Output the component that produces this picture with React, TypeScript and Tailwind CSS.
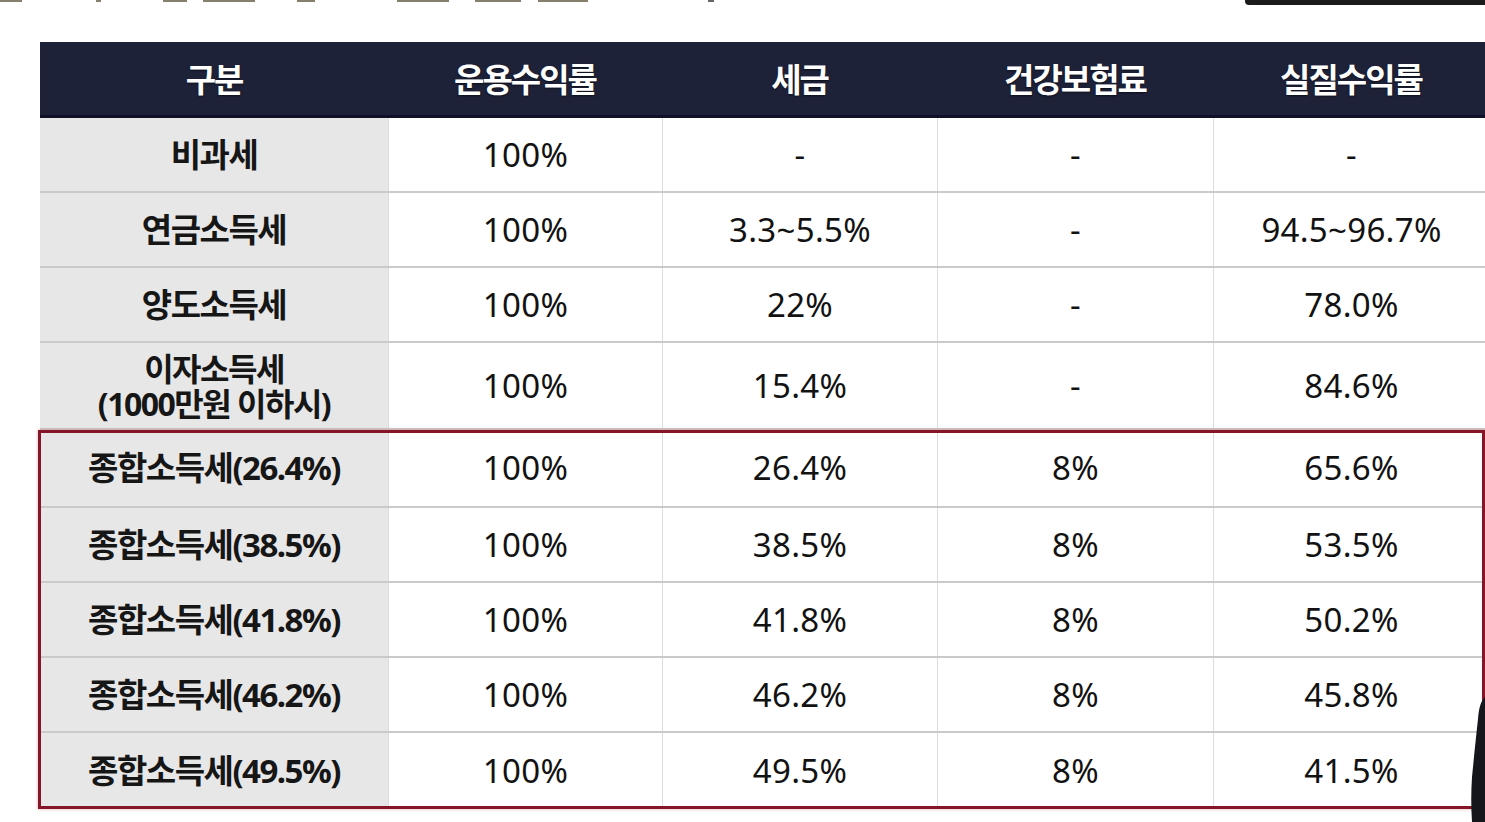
import React from "react";

type Row = { label: React.ReactNode; h: string; cells: string[] };

const headers = ["구분", "운용수익률", "세금", "건강보험료", "실질수익률"];

const plainRows: Row[] = [
  { label: "비과세", h: "h-[75px]", cells: ["100%", "-", "-", "-"] },
  { label: "연금소득세", h: "h-[75px]", cells: ["100%", "3.3~5.5%", "-", "94.5~96.7%"] },
  { label: "양도소득세", h: "h-[75px]", cells: ["100%", "22%", "-", "78.0%"] },
  {
    label: (
      <div className="flex flex-col items-center text-[32px] leading-[35px]">
        <span>이자소득세</span>
        <span>(1000만원 이하시)</span>
      </div>
    ),
    h: "h-[87px]",
    cells: ["100%", "15.4%", "-", "84.6%"],
  },
];

const comprehensiveRows: Row[] = [
  { label: "종합소득세(26.4%)", h: "h-[78px]", cells: ["100%", "26.4%", "8%", "65.6%"] },
  { label: "종합소득세(38.5%)", h: "h-[75px]", cells: ["100%", "38.5%", "8%", "53.5%"] },
  { label: "종합소득세(41.8%)", h: "h-[75px]", cells: ["100%", "41.8%", "8%", "50.2%"] },
  { label: "종합소득세(46.2%)", h: "h-[75px]", cells: ["100%", "46.2%", "8%", "45.8%"] },
  { label: "종합소득세(49.5%)", h: "h-[76px]", cells: ["100%", "49.5%", "8%", "41.5%"] },
];

const cols = "grid grid-cols-[348px_274px_275px_276px_276px]";

function TableRow({ row, last }: { row: Row; last?: boolean }) {
  return (
    <div className={`${cols} ${row.h} ${last ? "" : "border-b-2 border-[#cacaca]"}`}>
      <div className="flex items-center justify-center bg-[#e7e7e7] text-center text-[33px] font-bold tracking-[-1.5px] text-[#161616]">
        {row.label}
      </div>
      {row.cells.map((c, i) => (
        <div
          key={i}
          className="flex items-center justify-center border-l border-[#dcdcdc] text-[33px] tracking-[0.3px] text-[#121212]"
        >
          {c}
        </div>
      ))}
    </div>
  );
}

export default function App() {
  return (
    <div className="relative h-[822px] w-[1485px] overflow-hidden bg-white font-['Noto_Sans','Noto_Sans_CJK_KR',sans-serif]">
      {/* cut-off title fragments above the table */}
      <div className="absolute left-0 top-0 flex h-[2px] w-full">
        <div className="h-[2px] w-[22px] bg-[#857f6c]" />
        <div className="ml-[74px] h-[2px] w-[5px] bg-[#857f6c]" />
        <div className="ml-[62px] h-[2px] w-[24px] bg-[#857f6c]" />
        <div className="ml-[16px] h-[2px] w-[52px] bg-[#857f6c]" />
        <div className="ml-[42px] h-[2px] w-[18px] bg-[#857f6c]" />
        <div className="ml-[82px] h-[2px] w-[52px] bg-[#857f6c]" />
        <div className="ml-[26px] h-[2px] w-[46px] bg-[#857f6c]" />
        <div className="ml-[17px] h-[2px] w-[50px] bg-[#857f6c]" />
        <div className="ml-[120px] h-[2px] w-[6px] bg-[#666]" />
      </div>
      <div className="absolute right-0 top-0 h-[5px] w-[240px] rounded-bl-[4px] bg-[#1b1b1b]" />

      <div className="ml-[40px] mt-[42px] w-[1449px]">
        <div className={`${cols} h-[76px] border-b-[3px] border-[#0f1226] bg-[#1e2239]`}>
          {headers.map((h) => (
            <div
              key={h}
              className="flex items-center justify-center font-['Noto_Sans_CJK_KR',sans-serif] text-[33px] font-bold tracking-[-2px] text-white [text-shadow:0_1px_2px_rgba(0,0,0,0.6)]"
            >
              {h}
            </div>
          ))}
        </div>

        {plainRows.map((r, i) => (
          <TableRow key={i} row={r} />
        ))}

        <div className="relative">
          {comprehensiveRows.map((r, i) => (
            <TableRow key={i} row={r} last={i === comprehensiveRows.length - 1} />
          ))}
          <div className="pointer-events-none absolute -left-[2px] top-0 h-full w-[1447px] border-[3px] border-[#841627] shadow-[0_0_3px_rgba(220,80,100,0.5)]" />
        </div>
      </div>

      {/* presenter's shoulder at bottom right */}
      <svg className="absolute bottom-0 right-0" width="14" height="125" viewBox="0 0 14 125">
        <path d="M14 0 C10 4 8 10 7 22 C5 40 3 60 1 80 C0 95 0 110 1 125 L14 125 Z" fill="#15151c" />
      </svg>
    </div>
  );
}
